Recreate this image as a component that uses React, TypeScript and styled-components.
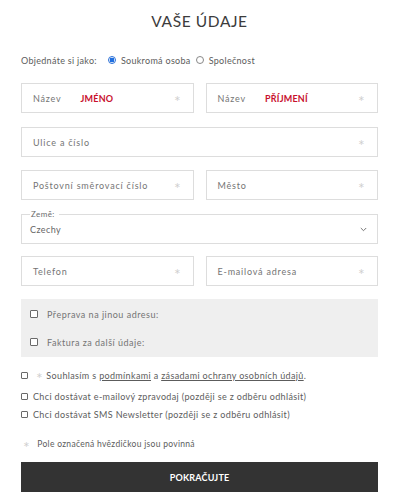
import styled, { createGlobalStyle } from 'styled-components';

const GlobalStyle = createGlobalStyle`
	body {
		margin: 0;
		background: #fff;
		font-family: Lato, 'Open Sans', sans-serif;
		color: #606060;
	}
`;

const Star = () => <SStar>∗</SStar>;

const App = () => {
	return (
		<SPage>
			<GlobalStyle />
			<Title>VAŠE ÚDAJE</Title>

			<TypeRow>
				<span className='type__label'>Objednáte si jako:</span>
				<Radio $checked />
				<span>Soukromá osoba</span>
				<Radio />
				<span>Společnost</span>
			</TypeRow>

			<FieldRow $top={15}>
				<Field>
					<FieldLabel>Název</FieldLabel>
					<FieldValue>JMÉNO</FieldValue>
					<Star />
				</Field>
				<Field>
					<FieldLabel>Název</FieldLabel>
					<FieldValue>PŘÍJMENÍ</FieldValue>
					<Star />
				</Field>
			</FieldRow>

			<FieldRow $top={14}>
				<Field>
					<FieldLabel>Ulice a číslo</FieldLabel>
					<Star />
				</Field>
			</FieldRow>

			<FieldRow $top={13}>
				<Field>
					<FieldLabel>Poštovní směrovací číslo</FieldLabel>
					<Star />
				</Field>
				<Field>
					<FieldLabel>Město</FieldLabel>
					<Star />
				</Field>
			</FieldRow>

			<SelectBox>
				<legend>Země:</legend>
				<div className='select__value'>
					<span>Czechy</span>
					<svg width='7' height='5' viewBox='0 0 7 5'>
						<path d='M0.8 1l2.7 2.7L6.2 1' fill='none' stroke='#666' strokeWidth='0.9' />
					</svg>
				</div>
			</SelectBox>

			<FieldRow $top={12}>
				<Field>
					<FieldLabel>Telefon</FieldLabel>
					<Star />
				</Field>
				<Field>
					<FieldLabel>E-mailová adresa</FieldLabel>
					<Star />
				</Field>
			</FieldRow>

			<GrayBox>
				<BoxOption>
					<CheckBox $size={8} />
					<span>Přeprava na jinou adresu:</span>
				</BoxOption>
				<BoxOption>
					<CheckBox $size={8} />
					<span>Faktura za další údaje:</span>
				</BoxOption>
			</GrayBox>

			<Consents>
				<ConsentRow $gap={3}>
					<CheckBox $size={7} />
					<span className='consent__star'>∗</span>
					<span>
						Souhlasím s <u>podmínkami</u> a <u>zásadami ochrany osobních údajů</u>.
					</span>
				</ConsentRow>
				<ConsentRow>
					<CheckBox $size={7} />
					<span>Chci dostávat e-mailový zpravodaj (později se z odběru odhlásit)</span>
				</ConsentRow>
				<ConsentRow>
					<CheckBox $size={7} />
					<span>Chci dostávat SMS Newsletter (později se z odběru odhlásit)</span>
				</ConsentRow>
			</Consents>

			<Note>
				<span className='note__star'>∗</span>
				<span>Pole označená hvězdičkou jsou povinná</span>
			</Note>

			<SubmitButton>POKRAČUJTE</SubmitButton>
		</SPage>
	);
};

export default App;

const SPage = styled.div`
	width: 357px;
	margin: 0 22px 0 21px;
	padding-top: 11px;
`;

const Title = styled.h1`
	margin: 0;
	text-align: center;
	font-size: 15.5px;
	line-height: 20px;
	font-weight: 400;
	letter-spacing: 0.6px;
	color: #3c3c3c;
`;

const TypeRow = styled.div`
	margin-top: 21px;
	height: 16px;
	display: flex;
	align-items: center;
	font-size: 9px;
	color: #5c5c5c;
	letter-spacing: 0.3px;

	.type__label {
		margin-right: 11px;
	}
`;

const Radio = styled.span<{ $checked?: boolean }>`
	width: 8px;
	height: 8px;
	box-sizing: border-box;
	border-radius: 50%;
	border: 1px solid ${(p) => (p.$checked ? '#2a6fd6' : '#888')};
	background: ${(p) => (p.$checked ? 'radial-gradient(circle, #1f6fe0 0 2.2px, #fff 2.6px)' : '#fff')};
	margin: 0 5px 0 0;

	& + span + & {
		margin-left: 5px;
	}
`;

const FieldRow = styled.div<{ $top: number }>`
	margin-top: ${(p) => p.$top}px;
	display: flex;
	gap: 12px;
`;

const Field = styled.div`
	flex: 1;
	height: 30px;
	box-sizing: border-box;
	border: 1px solid #ddd;
	display: flex;
	align-items: center;
	padding: 0 11px 0 11px;
	font-size: 9px;
	letter-spacing: 0.8px;
`;

const FieldLabel = styled.span`
	color: #747474;
	margin-right: 19px;
`;

const FieldValue = styled.span`
	color: #c8102e;
	font-weight: 700;
	letter-spacing: 0.2px;
`;

const SStar = styled.span`
	margin-left: auto;
	color: #cfcfcf;
	font-size: 8px;
`;

const SelectBox = styled.fieldset`
	margin: 9px 0 0;
	padding: 0 10px 0 8px;
	height: 35px;
	box-sizing: border-box;
	border: 1px solid #ddd;
	font-size: 9px;
	color: #666;
	letter-spacing: 0.4px;

	legend {
		padding: 0 4px 0 1px;
		font-size: 8px;
		line-height: 10px;
		color: #6c6c6c;
	}

	.select__value {
		display: flex;
		align-items: center;
		justify-content: space-between;
		height: 18px;
		margin-top: 1px;
	}
`;

const GrayBox = styled.div`
	margin-top: 13px;
	background: #efefef;
	padding: 1px 9px 1px 9px;
	display: flex;
	flex-direction: column;
	font-size: 9px;
	color: #747474;
	letter-spacing: 0.5px;
`;

const BoxOption = styled.div`
	height: 28px;
	display: flex;
	align-items: center;
	gap: 9px;
`;

const CheckBox = styled.span<{ $size: number }>`
	flex: none;
	width: ${(p) => p.$size}px;
	height: ${(p) => p.$size}px;
	box-sizing: border-box;
	border: 1px solid #6a6a6a;
	border-radius: 1px;
	background: #fff;
`;

const Consents = styled.div`
	margin-top: 9px;
	display: flex;
	flex-direction: column;
	font-size: 9px;
	color: #5c5c5c;
	letter-spacing: 0.35px;
`;

const ConsentRow = styled.div<{ $gap?: number }>`
	height: 18px;
	margin-bottom: ${(p) => p.$gap ?? 0}px;
	display: flex;
	align-items: center;
	gap: 5px;

	.consent__star {
		color: #cfcfcf;
		font-size: 8px;
		margin-left: 3px;
		margin-right: -2px;
	}

	u {
		text-underline-offset: 1px;
	}
`;

const Note = styled.div`
	margin-top: 12px;
	height: 18px;
	display: flex;
	align-items: center;
	font-size: 8.5px;
	color: #5c5c5c;
	letter-spacing: 0.3px;

	.note__star {
		color: #cfcfcf;
		font-size: 8px;
		margin: 0 7px 0 2px;
	}
`;

const SubmitButton = styled.button`
	display: block;
	width: 100%;
	height: 30px;
	margin-top: 9px;
	border: none;
	background: #333;
	color: #fff;
	font-family: Lato, 'Open Sans', sans-serif;
	font-weight: 700;
	font-size: 9px;
	letter-spacing: 0.2px;
	cursor: pointer;
`;
